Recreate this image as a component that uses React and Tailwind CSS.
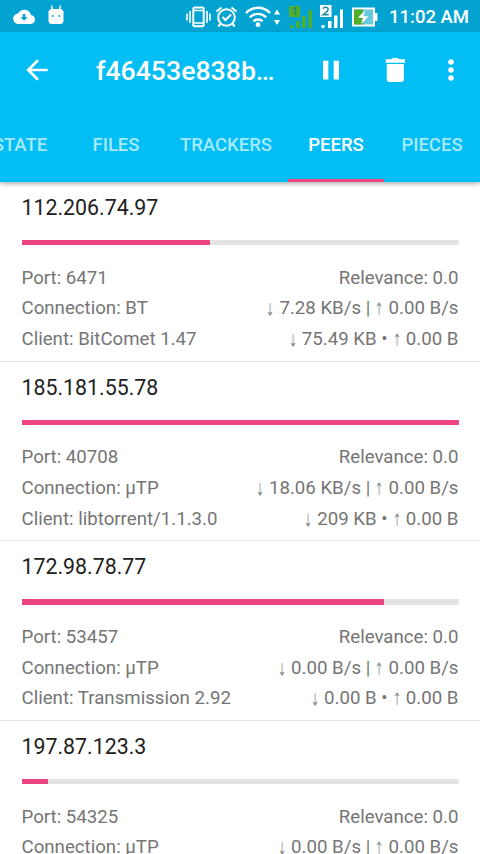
import React from "react";

const tabs = [
  { label: "STATE", width: "w-24" },
  { label: "FILES", width: "w-24" },
  { label: "TRACKERS", width: "w-[124px]" },
  { label: "PEERS", width: "w-24", active: true },
  { label: "PIECES", width: "w-24" },
];

const peers = [
  { ip: "112.206.74.97", progress: 43.1, port: 6471, connection: "BT", client: "BitComet 1.47", downSpeed: "7.28 KB/s", upSpeed: "0.00 B/s", down: "75.49 KB", up: "0.00 B" },
  { ip: "185.181.55.78", progress: 100, port: 40708, connection: "µTP", client: "libtorrent/1.1.3.0", downSpeed: "18.06 KB/s", upSpeed: "0.00 B/s", down: "209 KB", up: "0.00 B" },
  { ip: "172.98.78.77", progress: 83, port: 53457, connection: "µTP", client: "Transmission 2.92", downSpeed: "0.00 B/s", upSpeed: "0.00 B/s", down: "0.00 B", up: "0.00 B" },
  { ip: "197.87.123.3", progress: 6.1, port: 54325, connection: "µTP", downSpeed: "0.00 B/s", upSpeed: "0.00 B/s" },
];

function StatusBar() {
  return (
    <div className="flex h-8 shrink-0 items-center bg-[#03a3d1] pt-px text-white">
      <svg className="ml-[13px] h-4 w-[22px]" viewBox="0 0 22 16" fill="currentColor">
        <path d="M18 6C17.3 2.900 14.500.7 11.300.7c-2.700 0-5 1.500-6.200 3.800A5.200 5.200 0 0 0 5.700 15H17a4.500 4.500 0 0 0 1-9z" />
        <path d="M9.800 5h2.600v3h2.200l-3.500 3.800L7.600 8h2.200z" fill="#03a3d1" />
      </svg>
      <svg className="mb-[3px] ml-[12px] h-5 w-[18px]" viewBox="0 0 18 20">
        <path d="M4.500 .5l1 4.500M13.500 .5l-1 4.500" stroke="white" strokeWidth="1.400" />
        <path d="M4 4h10l2.500 2v9.500a3.500 3.500 0 0 1-3.500 3.500H5a3.500 3.500 0 0 1-3.500-3.500V6z" fill="white" />
        <circle cx="5.700" cy="11" r="1" fill="#03a3d1" />
        <circle cx="12.300" cy="11" r="1" fill="#03a3d1" />
        <path d="M5 14.500q4 1.500 8 0" stroke="#d5f0f7" fill="none" />
      </svg>
      <svg className="ml-[121px] h-[22px] w-[25px]" viewBox="0 0 25 22" fill="none" stroke="white" strokeWidth="1.600">
        <rect x="7.300" y="1.500" width="10.400" height="18.800" rx="1.500" strokeWidth="2" />
        <path d="M7.500 4.500h10M7.500 17h10M4 5v12M21 5v12M1 7.500v7M24 7.500v7" />
      </svg>
      <svg className="ml-[4px] h-[22px] w-[23px]" viewBox="0 0 23 22" fill="none" stroke="white" strokeWidth="2">
        <circle cx="11.500" cy="11.500" r="8.300" />
        <path d="M1.500 5.500l5-4M21.500 5.500l-5-4M5.500 18l-2.300 2.500M17.500 18l2.300 2.500M7.500 11l3 3 5.500-5.500" />
      </svg>
      <svg className="ml-[7px] h-[22px] w-[37px]" viewBox="0 0 37 22" fill="none" stroke="white" strokeWidth="2.400">
        <path d="M1 7a16.500 16.500 0 0 1 24 0M4.800 11.300a11.500 11.500 0 0 1 16.400 0M8.500 15.300a6.500 6.500 0 0 1 9 0" />
        <circle cx="13" cy="18.700" r="2.400" fill="white" stroke="none" />
        <path d="M29 8.500l3-5 3 5zM29 14h6l-3 5z" fill="white" stroke="none" />
      </svg>
      <svg className="ml-[7px] h-6 w-[24px]" viewBox="0 0 24 24" fill="#52ad2c">
        <rect x="0" y="1" width="11" height="11" />
        <path d="M4 4l2-1h.5v7" stroke="#168e7c" strokeWidth="1.500" fill="none" />
        <path d="M1 20h3v3H1zM7 16h3.500v7H7zM13 11h3.500v12H13zM19.500 5H23v18h-3.500z" />
      </svg>
      <svg className="ml-[7px] h-6 w-[24px]" viewBox="0 0 24 24" fill="white">
        <rect x="0" y="0" width="11.500" height="12" />
        <path d="M3 3.500q1-1.500 3-1.200 2.500.5 2 2.700-.5 1.500-4.800 4.700h5.500" stroke="#168eac" strokeWidth="1.500" fill="none" />
        <path d="M1.500 20h3v3h-3zM8 16h3.500v7H8zM14 10.500h3.500V23H14zM20 4.500h3V23h-3z" />
      </svg>
      <svg className="ml-[8px] h-5 w-[26px]" viewBox="0 0 26 20">
        <rect x="1" y="1.500" width="21" height="17" fill="#68c9df" stroke="white" strokeWidth="2" />
        <path d="M2 2.500h9v15H2z" fill="#52ad2c" />
        <path d="M23 6h2.500v8H23z" fill="white" />
        <path d="M13 3.500L6 10.500l5 .5-2 6 7.500-7.500-5-.5z" fill="white" />
      </svg>
      <span className="ml-[11px] whitespace-nowrap pt-px text-[18.500px] leading-6 font-medium">11:02 AM</span>
    </div>
  );
}

function Toolbar() {
  return (
    <div className="flex h-[75px] items-center pl-[21px] text-white">
      <svg className="h-8 w-8" viewBox="0 0 24 24" fill="currentColor">
        <path d="M20 11H7.830l5.590-5.590L12 4l-8 8 8 8 1.410-1.410L7.830 13H20v-2z" />
      </svg>
      <h1 className="ml-[43px] w-[218.500px] pt-[2px] whitespace-nowrap text-[26.670px] leading-8 font-medium">f46453e838b…</h1>
      <svg className="h-8 w-8" viewBox="0 0 24 24" fill="currentColor">
        <path d="M6 5h4v14.200H6zM14 5h4v14.200h-4z" />
      </svg>
      <svg className="ml-8 h-8 w-8" viewBox="0 0 24 24" fill="currentColor">
        <path d="M5.800 7.500h12.900V19c0 1.200-.8 2-2 2H7.800c-1.200 0-2-.8-2-2zM19.500 4h-4.300l-1-1h-4l-1 1H5v2.500h14.500z" />
      </svg>
      <svg className="ml-[24px] h-8 w-8" viewBox="0 0 24 24" fill="currentColor">
        <circle cx="12" cy="6" r="2.100" />
        <circle cx="12" cy="12" r="2.100" />
        <circle cx="12" cy="18" r="2.100" />
      </svg>
    </div>
  );
}

function Arrow({ children }) {
  return (
    <span className="inline-flex w-[9px] justify-center">
      <span className="inline-block scale-x-[0.65] font-['Noto_Sans_CJK_JP',sans-serif] text-[14px] leading-5">{children}</span>
    </span>
  );
}

function Transfer({ down, up, separator }) {
  return (
    <span>
      <Arrow>↓</Arrow> {down} {separator} <Arrow>↑</Arrow> {up}
    </span>
  );
}

function Peer({ peer }) {
  return (
    <li className="flex h-[179.670px] shrink-0 flex-col border-b border-[#e3e3e3] px-[21.500px] pt-[10px]">
      <h2 className="h-[32px] text-[21.330px] leading-[32px] text-[#212121]">{peer.ip}</h2>
      <div className="mt-[16px] h-[5.330px] shrink-0 bg-[#e4e4e4]">
        <div className="h-full bg-[#ed4581]" style={{ width: `${peer.progress}%` }} />
      </div>
      <div className="mt-[17.300px] text-[18.670px] leading-[30.700px] whitespace-nowrap text-[#757575]">
        <div className="flex justify-between">
          <span>Port: {peer.port}</span>
          <span>Relevance: 0.0</span>
        </div>
        <div className="flex h-[30.700px] justify-between">
          <span>Connection: {peer.connection}</span>
          <Transfer down={peer.downSpeed} up={peer.upSpeed} separator="|" />
        </div>
        {peer.client && (
          <div className="flex h-[30.700px] justify-between">
            <span>Client: {peer.client}</span>
            <Transfer down={peer.down} up={peer.up} separator="•" />
          </div>
        )}
      </div>
    </li>
  );
}

export default function App() {
  return (
    <div className="flex h-[854px] w-[480px] flex-col overflow-hidden bg-white font-[Roboto,sans-serif]">
      <StatusBar />
      <header className="z-10 h-[149.500px] shrink-0 bg-[#03bdf5] shadow-[0_2px_4px_rgba(0,0,0,0.3)]">
        <Toolbar />
        <nav className="flex h-[74.500px] justify-end overflow-hidden">
          {tabs.map((tab) => (
            <div
              key={tab.label}
              className={`flex shrink-0 items-center justify-center border-b-[3px] pt-[6px] text-[18.500px] font-medium ${tab.width} ${tab.active ? "border-[#ed4581] text-white" : "border-transparent text-[#a6eaff]"}`}
            >
              {tab.label}
            </div>
          ))}
        </nav>
      </header>
      <ul className="min-h-0 flex-1 overflow-hidden pt-[0.600px]">
        {peers.map((peer) => <Peer key={peer.ip} peer={peer} />)}
      </ul>
    </div>
  );
}
